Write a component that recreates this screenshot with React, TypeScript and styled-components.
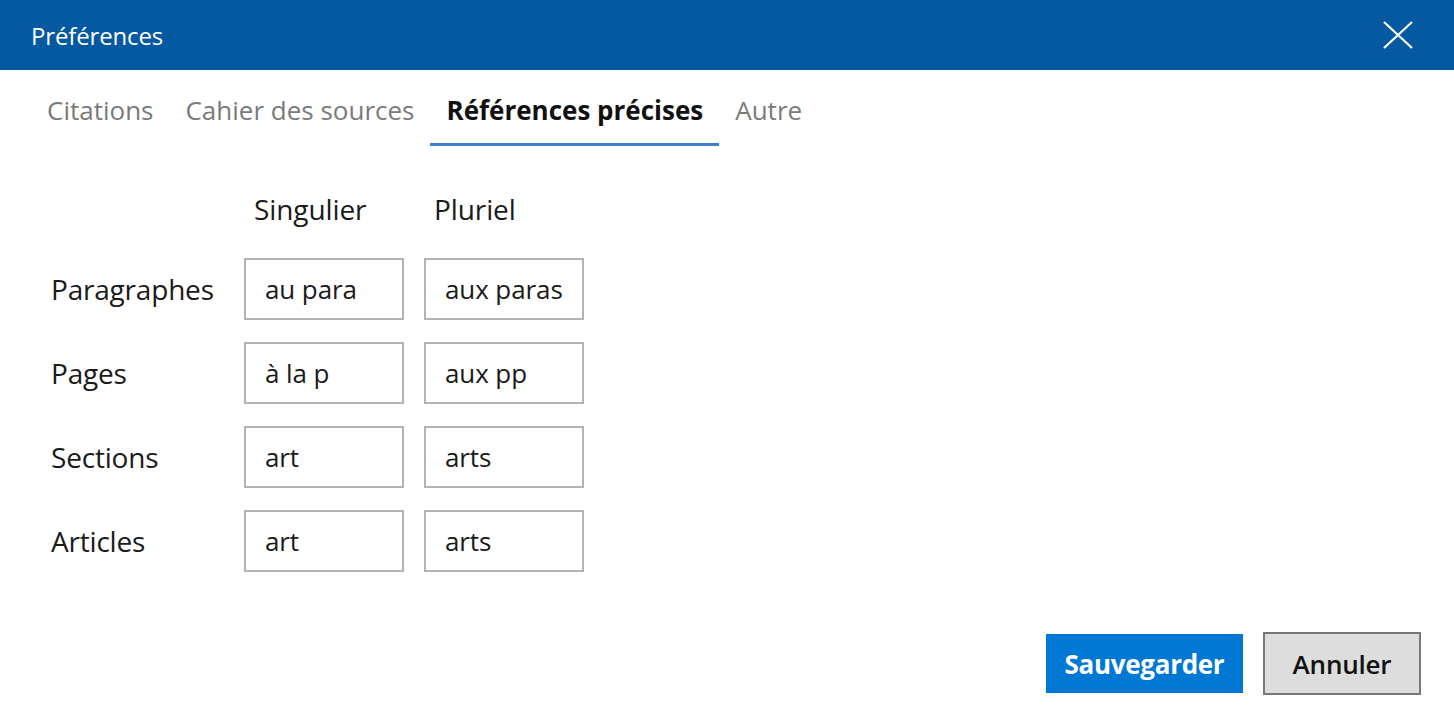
import React from "react";
import styled, {createGlobalStyle} from "styled-components";

const GlobalStyle = createGlobalStyle`
  html, body {
    margin: 0;
    padding: 0;
    background: #ffffff;
  }
  body {
    font-family: "Open Sans", "Noto Sans", sans-serif;
  }
`;

interface IRowProps {
    label: string;
    singular: string;
    plural: string;
}

const rows: Array<IRowProps> = [
    {label: "Paragraphes", singular: "au para", plural: "aux paras"},
    {label: "Pages", singular: "à la p", plural: "aux pp"},
    {label: "Sections", singular: "art", plural: "arts"},
    {label: "Articles", singular: "art", plural: "arts"},
];

const tabs = ["Citations", "Cahier des sources", "Références précises", "Autre"];

const App: React.FC = () => {
    return (
        <Dialog>
            <GlobalStyle/>
            <Header>
                <Title>Préférences</Title>
                <CloseButton aria-label="Fermer">
                    <svg width="30" height="28" viewBox="0 0 30 28">
                        <path d="M1 1 L29 27 M29 1 L1 27" stroke="#ffffff" strokeWidth="2.2" fill="none"/>
                    </svg>
                </CloseButton>
            </Header>
            <TabBar>
                {tabs.map((tab, index: number) => (
                    <Tab key={`tab-${index}`} $active={index === 2}>{tab}</Tab>
                ))}
            </TabBar>
            <Grid>
                <span/>
                <ColumnHeading>Singulier</ColumnHeading>
                <ColumnHeading>Pluriel</ColumnHeading>
                {rows.map((row, index: number) => (
                    <React.Fragment key={`row-${index}`}>
                        <RowLabel>{row.label}</RowLabel>
                        <TextField defaultValue={row.singular}/>
                        <TextField defaultValue={row.plural}/>
                    </React.Fragment>
                ))}
            </Grid>
            <Footer>
                <PrimaryButton>Sauvegarder</PrimaryButton>
                <SecondaryButton>Annuler</SecondaryButton>
            </Footer>
        </Dialog>
    );
};

export default App;

const Dialog = styled.div`
  display: flex;
  flex-direction: column;
  height: 100vh;
  box-sizing: border-box;
  background: #ffffff;
  color: #1a1a1a;
`;

const Header = styled.header`
  display: flex;
  align-items: center;
  justify-content: space-between;
  height: 70px;
  padding: 0 41px 0 31px;
  background: #0559a1;
  flex-shrink: 0;
`;

const Title = styled.h1`
  margin: 0;
  font-size: 24px;
  font-weight: 400;
  color: #ffffff;
  letter-spacing: -0.15px;
`;

const CloseButton = styled.button`
  display: flex;
  padding: 0;
  border: none;
  background: transparent;
  cursor: pointer;
`;

const TabBar = styled.nav`
  display: flex;
  padding-left: 31px;
`;

const Tab = styled.div<{ $active?: boolean }>`
  padding: 23px 16px 16px;
  font-size: 26px;
  line-height: 34px;
  font-weight: ${props => props.$active ? 700 : 400};
  color: ${props => props.$active ? "#111111" : "#7a7a7a"};
  border-bottom: 3px solid ${props => props.$active ? "#3d7fcf" : "transparent"};
  cursor: pointer;
`;

const Grid = styled.div`
  display: grid;
  grid-template-columns: 173px 160px 160px;
  grid-template-rows: 45px;
  grid-auto-rows: 62px;
  column-gap: 20px;
  row-gap: 22px;
  padding-left: 51px;
  margin-top: 45px;
`;

const ColumnHeading = styled.div`
  align-self: start;
  padding-left: 10px;
  font-size: 28px;
  line-height: 36px;
  letter-spacing: -0.1px;
  color: #1a1a1a;
`;

const RowLabel = styled.div`
  display: flex;
  align-items: center;
  font-size: 28px;
  letter-spacing: -0.2px;
  color: #1a1a1a;
  white-space: nowrap;
`;

const TextField = styled.input`
  box-sizing: border-box;
  width: 160px;
  height: 62px;
  padding: 0 0 0 19px;
  border: 2px solid #b3b3b3;
  font-family: inherit;
  font-size: 26px;
  letter-spacing: -0.1px;
  color: #1a1a1a;
  outline: none;
`;

const Footer = styled.footer`
  display: flex;
  justify-content: flex-end;
  align-items: center;
  gap: 20px;
  margin-top: auto;
  padding: 0 33px 31px 0;
`;

const PrimaryButton = styled.button`
  width: 197px;
  height: 59px;
  padding: 0;
  border: none;
  background: #0078d4;
  color: #ffffff;
  font-family: inherit;
  font-size: 26px;
  font-weight: 700;
  letter-spacing: -0.3px;
  cursor: pointer;
`;

const SecondaryButton = styled.button`
  width: 158px;
  height: 63px;
  padding: 0;
  border: 2px solid #787878;
  background: #dddddd;
  color: #111111;
  font-family: inherit;
  font-size: 26px;
  font-weight: 600;
  letter-spacing: -0.2px;
  cursor: pointer;
`;
